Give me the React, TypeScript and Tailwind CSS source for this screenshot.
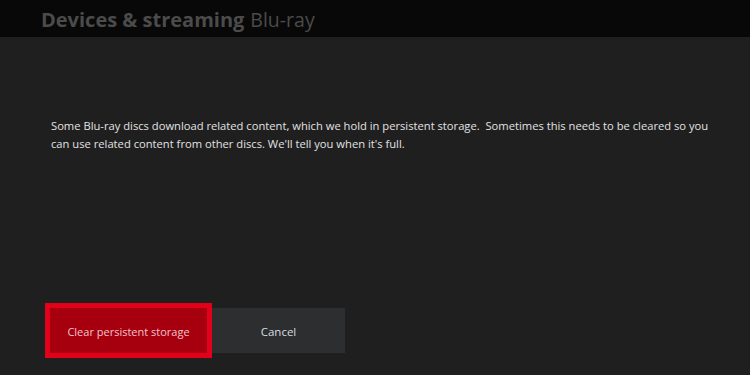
export default function App() {
  return (
    <div className="w-[750px] h-[375px] bg-[#1f1f1f] flex flex-col overflow-hidden" style={{ fontFamily: '"Open Sans", "Noto Sans", sans-serif' }}>
      <div className="h-[37px] bg-[#080808] flex items-center pl-[41px] pt-[3px] shrink-0">
        <span className="text-[20px] font-bold text-[#4b4b4b] leading-none">Devices &amp; streaming</span>
        <span className="text-[19.5px] text-[#4b4b4b] ml-[6px] leading-none">Blu-ray</span>
      </div>
      <div className="pl-[51px] pt-[80px] text-[11.2px] leading-[18px] text-[#e2e2e2]">
        <p className="w-[670px]">
          Some Blu-ray discs download related content, which we hold in persistent storage.&nbsp; Sometimes this needs to be cleared so you can use related content from other discs. We'll tell you when it's full.
        </p>
      </div>
      <div className="mt-auto mb-[17px] ml-[45px] flex items-center">
        <div className="w-[167px] h-[55px] border-[5px] border-[#e3001b] bg-[#a6000f] flex items-center justify-center pt-[3px] text-[11px] text-[#f4c3cb]">
          Clear persistent storage
        </div>
        <div className="w-[133px] h-[45px] bg-[#2d2e2f] flex items-center justify-center pt-[3px] text-[11.5px] text-[#d7dde0]">
          Cancel
        </div>
      </div>
    </div>
  );
}
